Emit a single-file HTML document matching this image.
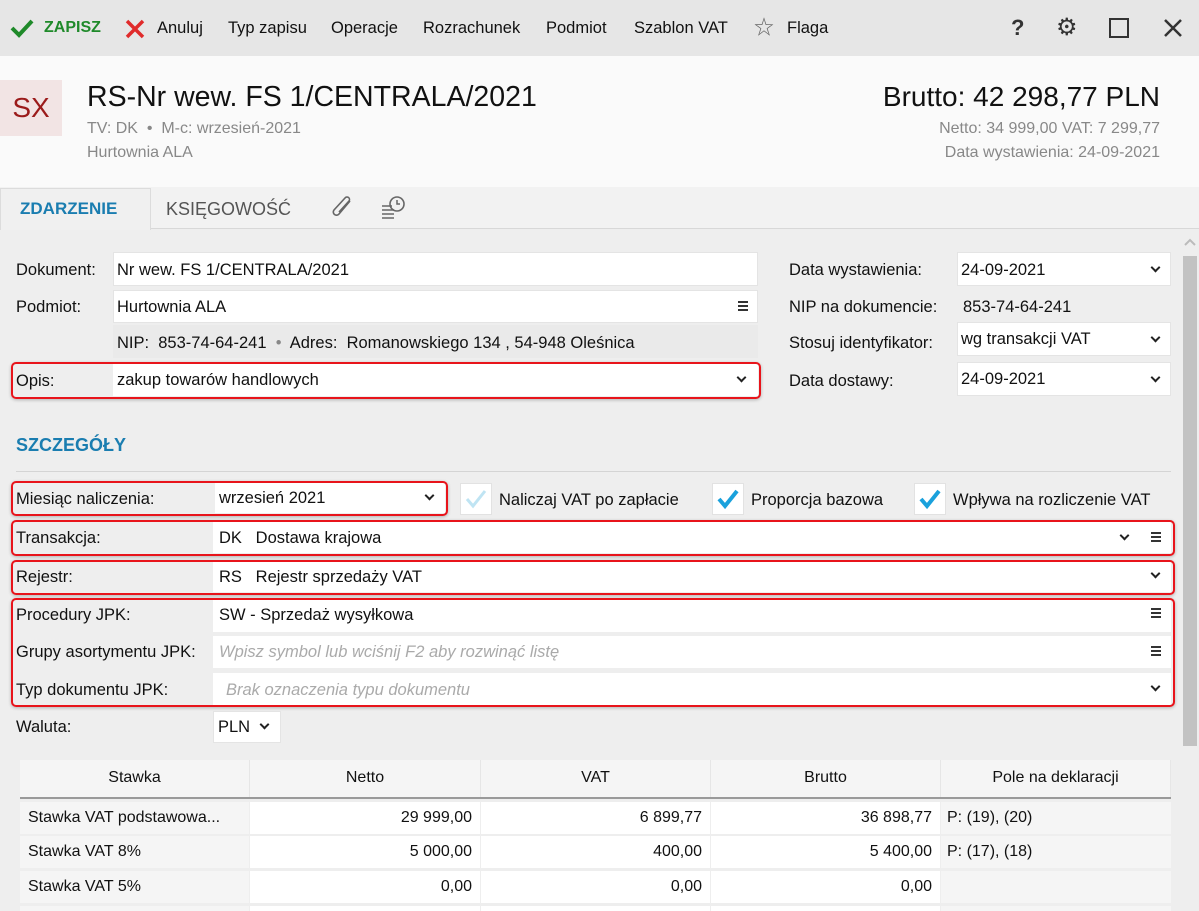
<!DOCTYPE html>
<html style="width:1199px;height:911px;overflow:hidden"><head><meta charset="utf-8">
<style>
*{margin:0;padding:0;box-sizing:border-box}
body{width:1199px;height:911px;overflow:hidden;background:#eeeeee;font-family:"Liberation Sans","Noto Sans CJK JP",sans-serif;font-size:16.5px;color:#111;position:relative}
.a{position:absolute;white-space:nowrap}
.t{position:absolute;white-space:nowrap;line-height:20px;transform:translateY(-10px)}
.in{position:absolute;background:#fff;border:1px solid #e4e4e4}
.red{position:absolute;border:2px solid #e8141b;border-radius:5px;box-shadow:0 1px 3px rgba(0,0,0,.25)}
.chev{position:absolute;width:7px;height:7px;border-right:2px solid #222;border-bottom:2px solid #222;transform:rotate(45deg)}
.ham{position:absolute;width:10px;height:10px;border-top:2px solid #333;border-bottom:2px solid #333}
.ham:after{content:"";position:absolute;left:0;right:0;top:2px;border-top:2px solid #333}
.cb{position:absolute;width:32px;height:32px;background:#fff;border:1px solid #e2e2e2}
.th{position:absolute;top:760px;height:38px;background:#f5f5f5;text-align:center;line-height:36px;font-size:16px;border-right:1px solid #e6e6e6}
.td{position:absolute;height:32px;line-height:32px;font-size:16px;padding:0 8px}
</style></head><body>
<div class="a" style="left:0;top:0;width:1199px;height:56px;background:#e6e6e6"></div>
<svg class="a" style="left:10px;top:18px" width="24" height="20" viewBox="0 0 24 20"><path d="M2 10 L9 17 L22 3" stroke="#1f8a2a" stroke-width="4" fill="none"/></svg>
<div class="t" style="left:44px;top:28px;color:#1f8a2a;font-weight:bold;font-size:16px">ZAPISZ</div>
<svg class="a" style="left:125px;top:19px" width="20" height="20"><path d="M2 2L18 18M18 2L2 18" stroke="#e02b2b" stroke-width="3.5"/></svg>
<div class="t" style="left:157px;top:28px">Anuluj</div>
<div class="t" style="left:228px;top:28px">Typ zapisu</div>
<div class="t" style="left:331px;top:28px">Operacje</div>
<div class="t" style="left:423px;top:28px">Rozrachunek</div>
<div class="t" style="left:546px;top:28px">Podmiot</div>
<div class="t" style="left:634px;top:28px">Szablon VAT</div>
<div class="t" style="left:754px;top:28px;color:#666;font-size:20px">☆</div>
<div class="t" style="left:787px;top:28px">Flaga</div>
<div class="t" style="left:1011px;top:28px;font-size:22px;font-weight:bold;color:#333">?</div>
<div class="t" style="left:1056px;top:28px;font-size:24px;color:#333">⚙</div>
<div class="a" style="left:1109px;top:18px;width:20px;height:20px;border:2.5px solid #333"></div>
<svg class="a" style="left:1163px;top:18px" width="20" height="20"><path d="M2 2L18 18M18 2L2 18" stroke="#333" stroke-width="2.5"/></svg>
<div class="a" style="left:0;top:56px;width:1199px;height:131px;background:#fafafa"></div>
<div class="a" style="left:0;top:80px;width:62px;height:56px;background:#f2e4e4;color:#9b1b1b;font-size:28px;line-height:56px;text-align:center">SX</div>
<div class="t" style="left:87px;top:97px;font-size:28.5px;line-height:34px;transform:translateY(-17px)">RS-Nr wew. FS 1/CENTRALA/2021</div>
<div class="t" style="left:87px;top:129px;color:#888;font-size:16px">TV: DK &nbsp;•&nbsp; M-c: wrzesień-2021</div>
<div class="t" style="left:87px;top:153px;color:#888;font-size:16px">Hurtownia ALA</div>
<div class="t" style="right:39px;top:97px;font-size:28px;line-height:34px;transform:translateY(-17px)">Brutto: 42 298,77 PLN</div>
<div class="t" style="right:39px;top:129px;color:#888;font-size:16px">Netto: 34 999,00 VAT: 7 299,77</div>
<div class="t" style="right:39px;top:153px;color:#888;font-size:16px">Data wystawienia: 24-09-2021</div>
<div class="a" style="left:0;top:187px;width:1199px;height:42px;background:#f2f2f2;border-bottom:1px solid #d8d8d8"></div>
<div class="a" style="left:0;top:188px;width:151px;height:42px;background:#f0f0f0;border:1px solid #dcdcdc;border-bottom:none"></div>
<div class="t" style="left:20px;top:209px;font-weight:bold;color:#1a7db0;font-size:17px">ZDARZENIE</div>
<div class="t" style="left:166px;top:209px;color:#555;font-size:18px">KSIĘGOWOŚĆ</div>
<svg class="a" style="left:330px;top:195px" width="26" height="26" viewBox="0 0 26 26"><path d="M20 6 L9 19 a3 3 0 0 1 -5 -4 L15 3 a2 2 0 0 1 4 3 L9 17" stroke="#666" stroke-width="1.6" fill="none"/></svg>
<svg class="a" style="left:380px;top:194px" width="28" height="26"><path d="M2 12h10M2 16h12M2 20h12M2 24h12" stroke="#666" stroke-width="1.5"/><circle cx="17" cy="10" r="7" stroke="#666" stroke-width="1.6" fill="none"/><path d="M17 6v4h3" stroke="#666" stroke-width="1.5" fill="none"/></svg>
<svg class="a" style="left:1183px;top:237px" width="14" height="10"><path d="M2 8L7 3L12 8" stroke="#bbb" stroke-width="2" fill="none"/></svg>
<div class="a" style="left:1183px;top:256px;width:14px;height:490px;background:#c2c2c2"></div>
<div class="t" style="left:16px;top:270px">Dokument:</div>
<div class="in" style="left:113px;top:252px;width:645px;height:34px"></div>
<div class="t" style="left:117px;top:270px">Nr wew. FS 1/CENTRALA/2021</div>
<div class="t" style="left:16px;top:307px">Podmiot:</div>
<div class="in" style="left:113px;top:290px;width:645px;height:33px"></div>
<div class="t" style="left:117px;top:307px">Hurtownia ALA</div>
<div class="ham" style="left:738px;top:301px"></div>
<div class="a" style="left:113px;top:325px;width:645px;height:33px;background:#eaeaea"></div>
<div class="t" style="left:117px;top:343px">NIP:&nbsp; 853-74-64-241 &nbsp;<span style="color:#888">•</span>&nbsp; Adres:&nbsp; Romanowskiego 134 , 54-948 Oleśnica</div>
<div class="a" style="left:113px;top:364px;width:645px;height:32px;background:#fff"></div>
<div class="red" style="left:11px;top:362px;width:750px;height:37px"></div>
<div class="t" style="left:16px;top:381px">Opis:</div>
<div class="t" style="left:117px;top:380px">zakup towarów handlowych</div>
<div class="chev" style="left:738px;top:374px"></div>
<div class="t" style="left:789px;top:270px">Data wystawienia:</div>
<div class="in" style="left:957px;top:252px;width:214px;height:34px"></div>
<div class="t" style="left:961px;top:270px">24-09-2021</div>
<div class="chev" style="left:1152px;top:264px"></div>
<div class="t" style="left:789px;top:307px">NIP na dokumencie:</div>
<div class="t" style="left:963px;top:307px">853-74-64-241</div>
<div class="t" style="left:789px;top:343px">Stosuj identyfikator:</div>
<div class="in" style="left:957px;top:322px;width:214px;height:34px"></div>
<div class="t" style="left:961px;top:339px">wg transakcji VAT</div>
<div class="chev" style="left:1152px;top:334px"></div>
<div class="t" style="left:789px;top:381px">Data dostawy:</div>
<div class="in" style="left:957px;top:362px;width:214px;height:34px"></div>
<div class="t" style="left:961px;top:379px">24-09-2021</div>
<div class="chev" style="left:1152px;top:374px"></div>
<div class="t" style="left:16px;top:445px;font-weight:bold;color:#1a7db0;font-size:18px">SZCZEGÓŁY</div>
<div class="a" style="left:16px;top:471px;width:1155px;height:1px;background:#d4d4d4"></div>
<div class="a" style="left:215px;top:483px;width:230px;height:30px;background:#fff"></div>
<div class="red" style="left:11px;top:481px;width:437px;height:35px"></div>
<div class="t" style="left:16px;top:499px">Miesiąc naliczenia:</div>
<div class="t" style="left:219px;top:498px">wrzesień 2021</div>
<div class="chev" style="left:426px;top:492px"></div>
<div class="cb" style="left:460px;top:483px"></div>
<svg class="a" style="left:464px;top:487px" width="24" height="24"><path d="M3 12L9 19L21 4" stroke="#bfe4f3" stroke-width="3" fill="none"/></svg>
<div class="t" style="left:499px;top:500px">Naliczaj VAT po zapłacie</div>
<div class="cb" style="left:712px;top:483px"></div>
<svg class="a" style="left:716px;top:487px" width="24" height="24"><path d="M3 12L9 19L21 4" stroke="#1aa1dc" stroke-width="4" fill="none"/></svg>
<div class="t" style="left:751px;top:500px">Proporcja bazowa</div>
<div class="cb" style="left:914px;top:483px"></div>
<svg class="a" style="left:918px;top:487px" width="24" height="24"><path d="M3 12L9 19L21 4" stroke="#1aa1dc" stroke-width="4" fill="none"/></svg>
<div class="t" style="left:953px;top:500px">Wpływa na rozliczenie VAT</div>
<div class="a" style="left:213px;top:522px;width:958px;height:31px;background:#fff"></div>
<div class="red" style="left:11px;top:520px;width:1164px;height:36px"></div>
<div class="t" style="left:16px;top:538px">Transakcja:</div>
<div class="t" style="left:219px;top:538px">DK &nbsp; Dostawa krajowa</div>
<div class="chev" style="left:1121px;top:532px"></div>
<div class="ham" style="left:1151px;top:532px"></div>
<div class="a" style="left:213px;top:562px;width:958px;height:30px;background:#fff"></div>
<div class="red" style="left:11px;top:560px;width:1164px;height:35px"></div>
<div class="t" style="left:16px;top:577px">Rejestr:</div>
<div class="t" style="left:219px;top:577px">RS &nbsp; Rejestr sprzedaży VAT</div>
<div class="chev" style="left:1152px;top:570px"></div>
<div class="a" style="left:213px;top:600px;width:958px;height:32px;background:#fff"></div>
<div class="a" style="left:213px;top:636px;width:958px;height:32px;background:#fff"></div>
<div class="a" style="left:213px;top:673px;width:958px;height:32px;background:#fff"></div>
<div class="red" style="left:11px;top:598px;width:1164px;height:109px"></div>
<div class="t" style="left:16px;top:615px">Procedury JPK:</div>
<div class="t" style="left:219px;top:615px">SW - Sprzedaż wysyłkowa</div>
<div class="ham" style="left:1151px;top:608px"></div>
<div class="t" style="left:16px;top:652px">Grupy asortymentu JPK:</div>
<div class="t" style="left:219px;top:652px;color:#aaa;font-style:italic">Wpisz symbol lub wciśnij F2 aby rozwinąć listę</div>
<div class="ham" style="left:1151px;top:646px"></div>
<div class="t" style="left:16px;top:690px">Typ dokumentu JPK:</div>
<div class="t" style="left:226px;top:690px;color:#aaa;font-style:italic">Brak oznaczenia typu dokumentu</div>
<div class="chev" style="left:1152px;top:683px"></div>
<div class="t" style="left:16px;top:727px">Waluta:</div>
<div class="in" style="left:213px;top:711px;width:68px;height:32px"></div>
<div class="t" style="left:218px;top:727px">PLN</div>
<div class="chev" style="left:261px;top:721px"></div>
<div class="th" style="left:20px;width:230px">Stawka</div>
<div class="th" style="left:250px;width:231px">Netto</div>
<div class="th" style="left:481px;width:230px">VAT</div>
<div class="th" style="left:711px;width:230px">Brutto</div>
<div class="th" style="left:941px;width:230px">Pole na deklaracji</div>
<div class="a" style="left:20px;top:797px;width:1151px;height:2px;background:#9a9a9a"></div>
<div class="td" style="left:20px;top:802px;width:229px;background:#f5f5f5">Stawka VAT podstawowa...</div>
<div class="td" style="left:250px;top:802px;width:230px;background:#fff;text-align:right">29 999,00</div>
<div class="td" style="left:481px;top:802px;width:229px;background:#fff;text-align:right">6 899,77</div>
<div class="td" style="left:711px;top:802px;width:229px;background:#fff;text-align:right">36 898,77</div>
<div class="td" style="left:941px;top:802px;width:230px;background:#f5f5f5;padding-left:6px">P: (19), (20)</div>
<div class="td" style="left:20px;top:836px;width:229px;background:#f5f5f5">Stawka VAT 8%</div>
<div class="td" style="left:250px;top:836px;width:230px;background:#fff;text-align:right">5 000,00</div>
<div class="td" style="left:481px;top:836px;width:229px;background:#fff;text-align:right">400,00</div>
<div class="td" style="left:711px;top:836px;width:229px;background:#fff;text-align:right">5 400,00</div>
<div class="td" style="left:941px;top:836px;width:230px;background:#f5f5f5;padding-left:6px">P: (17), (18)</div>
<div class="td" style="left:20px;top:871px;width:229px;background:#f5f5f5">Stawka VAT 5%</div>
<div class="td" style="left:250px;top:871px;width:230px;background:#fff;text-align:right">0,00</div>
<div class="td" style="left:481px;top:871px;width:229px;background:#fff;text-align:right">0,00</div>
<div class="td" style="left:711px;top:871px;width:229px;background:#fff;text-align:right">0,00</div>
<div class="td" style="left:941px;top:871px;width:230px;background:#f5f5f5"></div>
<div class="td" style="left:20px;top:906px;width:229px;height:5px;background:#f5f5f5"></div>
<div class="td" style="left:250px;top:906px;width:230px;height:5px;background:#fff"></div>
<div class="td" style="left:481px;top:906px;width:229px;height:5px;background:#fff"></div>
<div class="td" style="left:711px;top:906px;width:229px;height:5px;background:#fff"></div>
<div class="td" style="left:941px;top:906px;width:230px;height:5px;background:#f5f5f5"></div>
</body></html>
